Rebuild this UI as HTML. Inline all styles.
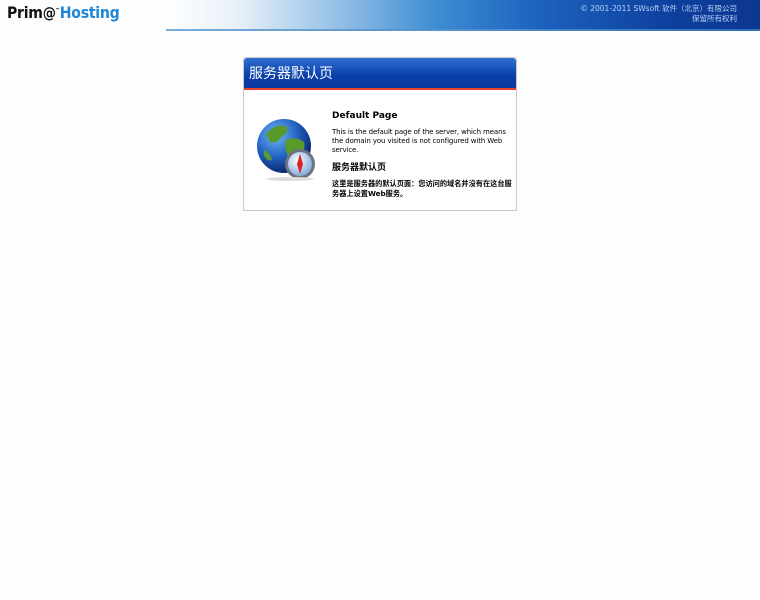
<!DOCTYPE html>
<html><head><meta charset="utf-8"><style>
*{margin:0;padding:0}
body{width:760px;height:600px;background:#fdfdfd;position:relative;overflow:hidden;font-family:"DejaVu Sans","Noto Sans CJK SC",sans-serif}
#logo{position:absolute;left:7px;top:3px;font-size:16px;font-weight:bold;letter-spacing:-0.3px;font-family:"DejaVu Sans",sans-serif;transform:scaleX(0.88);transform-origin:left}
#band{position:absolute;left:166px;top:0;width:594px;height:29px;background:linear-gradient(90deg,#fff 0%,#e8f0f9 12%,#8fbde5 30%,#3f8fd3 45%,#1d63c0 62%,#0e3f9e 85%,#0b3791 100%)}
#bline{position:absolute;left:166px;top:29px;width:594px;height:2px;background:linear-gradient(90deg,#7aaed8,#2d6fb4)}
#copy{position:absolute;right:23px;top:4px;text-align:right;color:#b5d2f5;font-size:7.5px;line-height:10px;letter-spacing:0}
#box{position:absolute;left:243px;top:57px;width:272px;height:152px;border:1px solid #c9c9c9;background:#fff;border-radius:3px 3px 0 0}
#tb{height:30px;background:linear-gradient(180deg,#2f6fd0,#0a3ea8 60%,#0a389e);border-radius:3px 3px 0 0;color:#fff;font-size:14px;line-height:31px;padding-left:5px;font-family:"Noto Sans CJK SC",sans-serif}
#red{height:2px;background:#e8452a}
#txt{position:absolute;left:88px;top:54px;width:186px;font-size:7px;line-height:9px;color:#000;letter-spacing:-0.12px}
h3{font-size:9px;margin-bottom:7px;letter-spacing:0}
</style></head><body>
<div id="logo"><span style="color:#111">Prim</span><span style="color:#111;font-size:15px">@</span><sup style="font-size:5px">™</sup><span style="color:#1d86d6">Hosting</span></div>
<div id="band"></div><div id="bline"></div>
<div id="copy">© 2001-2011 SWsoft 软件（北京）有限公司<br>保留所有权利</div>
<div id="box"><div id="tb">服务器默认页</div><div id="red"></div>
<svg style="position:absolute;left:12px;top:58px" width="64" height="66" viewBox="0 0 64 66">
<defs><radialGradient id="g" cx="35%" cy="30%" r="70%"><stop offset="0" stop-color="#6fb6f5"/><stop offset="0.6" stop-color="#1f5fbf"/><stop offset="1" stop-color="#0c2a6e"/></radialGradient>
<radialGradient id="c" cx="40%" cy="35%" r="70%"><stop offset="0" stop-color="#fff"/><stop offset="1" stop-color="#7ea6d8"/></radialGradient></defs>
<circle cx="28" cy="30" r="27" fill="url(#g)"/>
<path d="M10 18 Q18 8 30 10 Q34 16 26 20 Q22 28 14 26 Z M30 24 Q40 20 48 26 Q50 36 42 40 Q36 48 32 40 Q28 32 30 24Z M8 34 Q14 36 16 44 Q12 46 8 40Z" fill="#5a9a2a"/>
<circle cx="44" cy="48" r="15" fill="#6b7480"/><circle cx="44" cy="48" r="12" fill="url(#c)"/>
<path d="M44 38 L47 48 L44 58 L41 48Z" fill="#d22"/>
<ellipse cx="34" cy="63" rx="24" ry="2" fill="#ddd"/>
</svg>
<div id="txt"><h3>Default Page</h3><div style="font-weight:500">This is the default page of the server, which means the domain you visited is not configured with Web service.</div><h3 style="margin-top:7px;margin-bottom:8px;font-size:9px;font-family:'Noto Sans CJK SC',sans-serif">服务器默认页</h3><div style="line-height:10px;font-weight:bold;font-size:7.2px;letter-spacing:0">这里是服务器的默认页面：您访问的域名并没有在这台服务器上设置Web服务。</div></div>
</div>
</body></html>
